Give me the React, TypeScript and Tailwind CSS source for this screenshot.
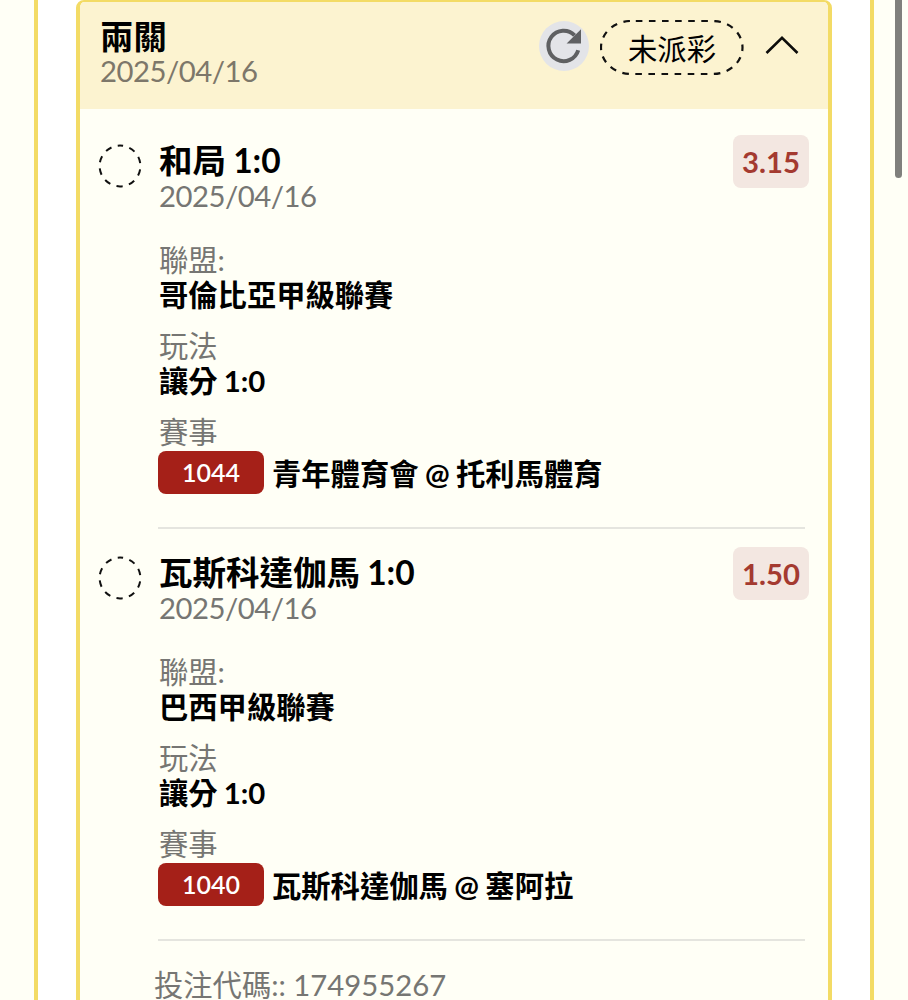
import React from 'react';

interface Leg {
    id: string;
    pick: string;
    date: string;
    odds: string;
    league: string;
    play: string;
    matchNo: string;
    match: string;
}

const legs: Leg[] = [
    {
        id: 'leg-1',
        pick: '和局 1:0',
        date: '2025/04/16',
        odds: '3.15',
        league: '哥倫比亞甲級聯賽',
        play: '讓分 1:0',
        matchNo: '1044',
        match: '青年體育會 @ 托利馬體育',
    },
    {
        id: 'leg-2',
        pick: '瓦斯科達伽馬 1:0',
        date: '2025/04/16',
        odds: '1.50',
        league: '巴西甲級聯賽',
        play: '讓分 1:0',
        matchNo: '1040',
        match: '瓦斯科達伽馬 @ 塞阿拉',
    },
];

const RefreshIcon: React.FC = () => (
    <svg viewBox="0 0 50 50" className="h-[50px] w-[50px]" fill="none">
        <circle cx="25" cy="25" r="25" fill="#e3e4e8" />
        <path d="M39.2 29.2 A15.2 15.2 0 1 1 35.6 14.4" stroke="#5f6062" strokeWidth="4" />
        <path d="M42 8.2 V22.6 H27.6 Z" fill="#5f6062" />
    </svg>
);

const ChevronUp: React.FC = () => (
    <svg viewBox="0 0 34 20" className="h-5 w-[34px]" fill="none" stroke="#0c0c0a" strokeWidth="2.6">
        <path d="M1.5 18 L17 2.8 L32.5 18" />
    </svg>
);

const PendingCircle: React.FC = () => (
    <svg viewBox="0 0 44 44" className="h-11 w-11" fill="none">
        <circle
            cx="22"
            cy="22"
            r="20.4"
            stroke="#111"
            strokeWidth="2"
            strokeDasharray="6.4 6.42"
            strokeDashoffset="3.2"
            transform="rotate(-90 22 22)"
        />
    </svg>
);

const Field: React.FC<{ label: string; value: string }> = ({ label, value }) => (
    <div className="mb-4">
        <p className="leading-9 text-[#767673]">{label}</p>
        <p className="leading-[34px] font-bold [word-spacing:-1px]">{value}</p>
    </div>
);

const LegItem: React.FC<{ leg: Leg }> = ({ leg }) => (
    <div className="flex h-[384px] items-start">
        <div className="mt-[1px] w-[61px] shrink-0">
            <PendingCircle />
        </div>
        <div className="grow">
            <h3 className="-mt-px mb-px text-[33.5px] leading-9 font-bold [word-spacing:-1px]">{leg.pick}</h3>
            <p className="mb-[29px] leading-[34px] tracking-[-0.5px] text-[#767673]">{leg.date}</p>
            <Field label="聯盟:" value={leg.league} />
            <Field label="玩法" value={leg.play} />
            <p className="leading-9 text-[#767673]">賽事</p>
            <div className="mt-px -ml-px flex items-center">
                <span className="mr-2 h-[43px] w-[106px] rounded-lg bg-[#a52018] text-center text-[25px] leading-[43px] font-semibold text-white">
                    {leg.matchNo}
                </span>
                <span className="pt-[2px] leading-[41px] font-bold [word-spacing:-0.7px]">{leg.match}</span>
            </div>
        </div>
        <div className="-mt-2 h-[53px] w-[76px] rounded-lg bg-[#f3e7e1] text-center leading-[53px] font-bold text-[#a43a30]">
            {leg.odds}
        </div>
    </div>
);

const App: React.FC = () => {
    return (
        <div className="relative flex h-[1000px] w-[908px] overflow-hidden bg-[#fffff6] pl-[34px] font-['Lato','Noto_Sans_CJK_TC',sans-serif] text-[29.3px] text-black">
            <div className="w-[840px] border-x-4 border-[#f3db65] bg-white px-[38px]">
                <section className="h-[1040px] overflow-hidden rounded-lg border-4 border-t-2 border-[#f3db65] bg-[#fffff6]">
                    <header className="flex h-[107px] items-start bg-[#fcf3d0] pt-[17px] pl-5">
                        <div className="w-[439px]">
                            <h2 className="-mt-px text-[33.4px] leading-9 font-bold">兩關</h2>
                            <p className="leading-[34px] tracking-[-0.5px] text-[#7d776a]">2025/04/16</p>
                        </div>
                        <div className="mt-[2px] mr-[11px]">
                            <RefreshIcon />
                        </div>
                        <div className="relative mt-px h-14 w-36 text-center leading-[58px]">
                            <svg viewBox="0 0 144 56" className="absolute inset-0 h-14 w-36" fill="none">
                                <rect
                                    x="1"
                                    y="1"
                                    width="141.5"
                                    height="53"
                                    rx="30"
                                    ry="26.5"
                                    stroke="#111"
                                    strokeWidth="2.2"
                                    strokeDasharray="6.6 6.5"
                                    strokeDashoffset="8.3"
                                />
                            </svg>
                            未派彩
                        </div>
                        <div className="mt-[16px] ml-[21px]">
                            <ChevronUp />
                        </div>
                    </header>

                    <div className="pt-[34px] pr-[19px] pl-[18px]">
                        <LegItem leg={legs[0]} />
                        <hr className="mr-1 mb-[26px] ml-[60px] border-t-2 border-[#e5e5df]" />
                        <LegItem leg={legs[1]} />
                        <hr className="mr-1 mb-[26px] ml-[60px] border-t-2 border-[#e5e5df]" />
                        <p className="ml-[56px] leading-9 text-[#767673]">投注代碼:: 174955267</p>
                    </div>
                </section>
            </div>
            {/* scroll thumb */}
            <div className="absolute top-0 right-[6px] h-[178px] w-[7px] rounded-b-full bg-[#80807c]" />
        </div>
    );
};

export default App;
